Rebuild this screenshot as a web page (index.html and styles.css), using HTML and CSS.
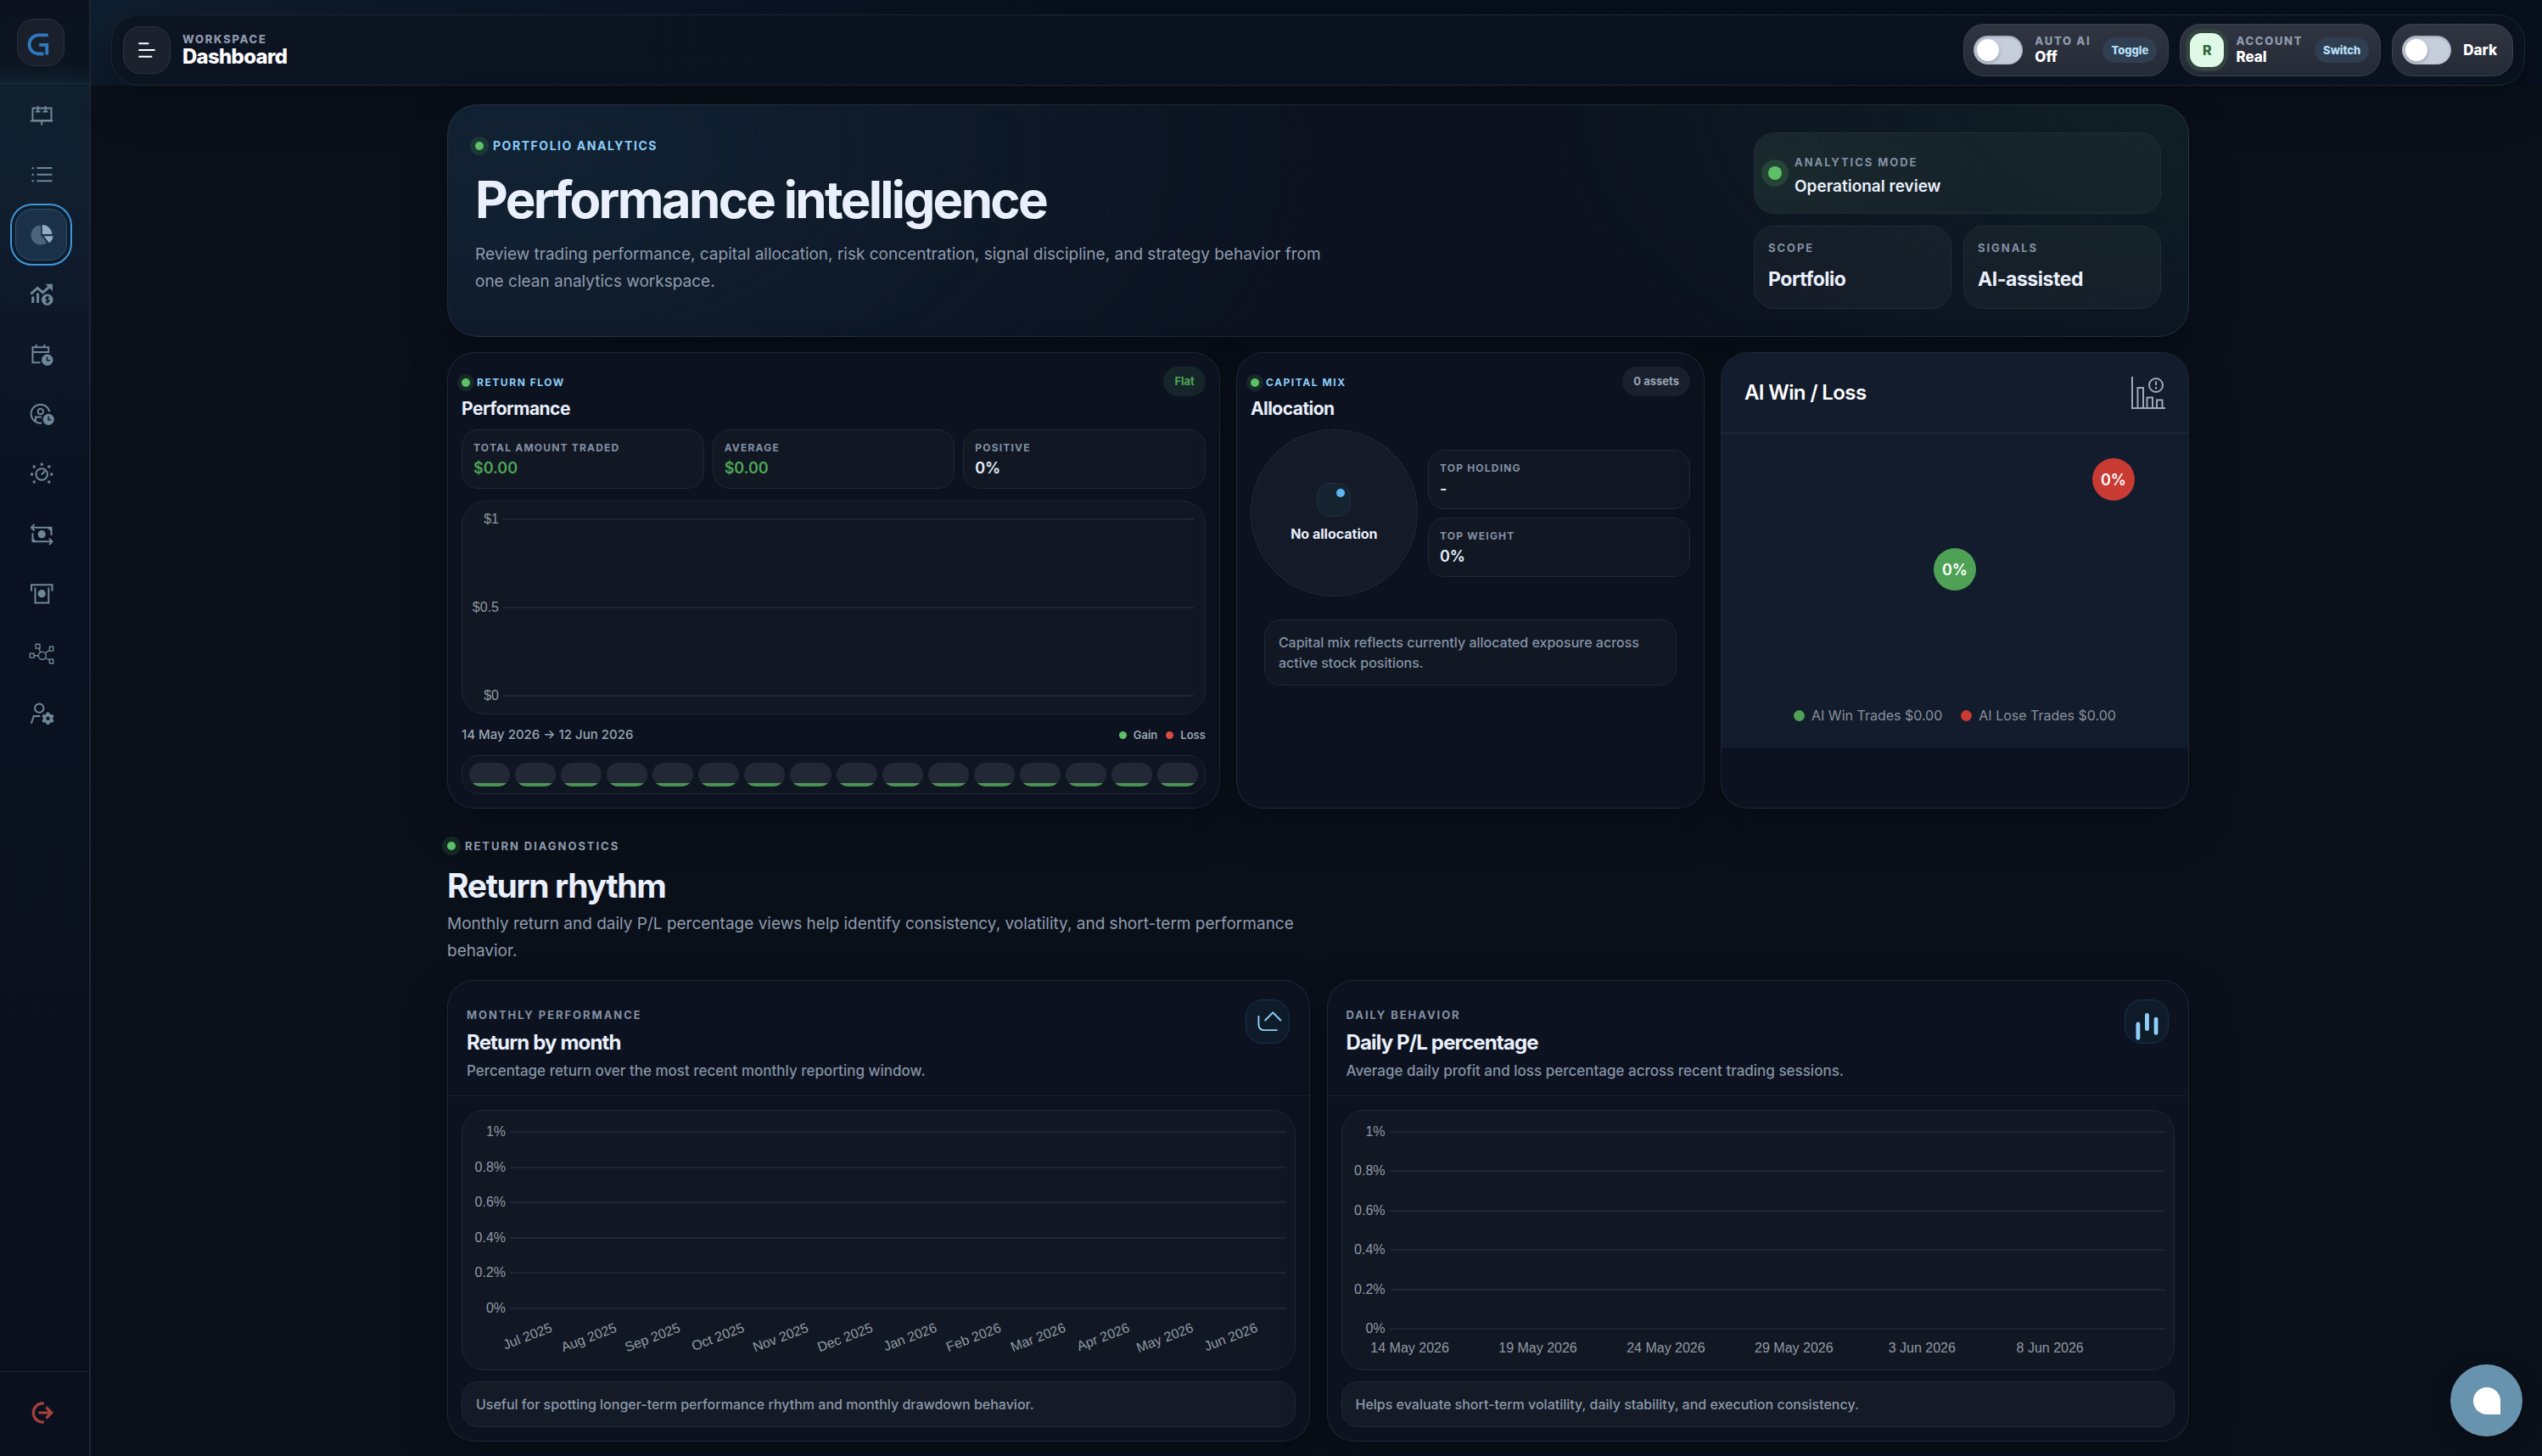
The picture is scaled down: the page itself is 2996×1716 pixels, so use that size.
FILE: index.html
```html
<!DOCTYPE html>
<html lang="en">
<head>
<meta charset="utf-8">
<meta name="viewport" content="width=device-width, initial-scale=1">
<title>Dashboard</title>
<link rel="stylesheet" href="styles.css">
</head>
<body>
<div class="app">
  <aside class="sidebar">
    <div class="brand">
      <a class="brand-logo" href="#" aria-label="Home">
        <svg viewBox="0 0 56 56"><path d="M37 19H25.500a11.500 11.500 0 0 0 0 23H31.500M26 31h9.500v12" /></svg>
      </a>
    </div>
    <nav class="nav" aria-label="Main">
      <a class="nav-item" href="#" aria-label="Boards"><svg viewBox="0 0 28 28"><path d="M3.500 5.500h22v14.500h-22zM.8 20.500h26.600M14.200 20v5.600M6.800 9.500h5.800M9.700 3v6.500M15.600 9.500h5.800M18.500 3v6.500"/></svg></a>
      <a class="nav-item" href="#" aria-label="List"><svg viewBox="0 0 28 28"><path d="M8.500 6h18M8.500 13.700h18M8.500 21.300h18M2.500 6.300h2.500M2.500 13.700h2.500M2.500 21.300h2.500"/></svg></a>
      <a class="nav-item active" href="#" aria-label="Analytics" aria-current="page"><svg viewBox="0 0 28 28"><path class="pie-dim" d="M13 2.600V14l7.200 9A11.500 11.500 0 1 1 13 2.600z"/><path class="pie-lit" d="M14.800 2A11.500 11.500 0 0 1 26.300 13H14.800zM16.500 15.300h11a11 11 0 0 1-4.300 7.900z"/></svg></a>
      <a class="nav-item" href="#" aria-label="Earnings"><svg viewBox="0 0 28 28"><path class="bold" d="M1.400 13.400 9.200 6.400l6.300 5.300 7-6M3.800 16.500V24M9.600 12.500V24"/><path class="fill" d="M18.500 1.800H27v8.500z"/><circle class="fill" cx="20.800" cy="20.300" r="6.800"/><path class="knock" d="M23 17.800c-.8-.8-4-.9-4 .8 0 1.800 3.900 1 3.900 2.900 0 1.700-3.300 1.500-4.200.6M20.900 15.800v9"/></svg></a>
      <a class="nav-item" href="#" aria-label="Schedule"><svg viewBox="0 0 28 28"><path d="M12.500 23.200H3.500V5.200h18.700V11H3.500M7.800 2v3M17.200 2v3"/><circle class="fill" cx="20.800" cy="20.300" r="6.700"/><path class="knock" d="M20.500 16.500v4.300h3.500"/></svg></a>
      <a class="nav-item" href="#" aria-label="Account history"><svg viewBox="0 0 28 28"><path d="M23.300 11.200A11 11 0 1 0 14.200 24.600M7 22.500v-5h7"/><circle cx="12.800" cy="11" r="3.200"/><circle class="fill" cx="22.200" cy="20.300" r="6.600"/><path class="knock" d="M22 16.500v4.300h3.500"/></svg></a>
      <a class="nav-item" href="#" aria-label="Risk dial"><svg viewBox="0 0 28 28"><circle cx="14.200" cy="14" r="6.800"/><path d="M13.700 14.500 18 10.200"/><path class="fill" d="M12.700.8h3v3h-3zM3.700 3.500h3v3h-3zM21.300 3.500h3v3h-3zM1 12.500h3v3H1zM24.300 12.500h3v3h-3zM3.700 21.500h3v3h-3zM21.300 21.500h3v3h-3z"/></svg></a>
      <a class="nav-item" href="#" aria-label="Transfers"><svg viewBox="0 0 28 28"><path d="M5.500 2 2 5.700l3.500 3.800M2 5.700h23.500V15M23 18.500l3.500 3.700L23 26M26.500 22.200H3.500v-10"/><path class="fill" d="M20 5.700h6V11zM3 17v5.500h5z"/><circle class="fill" cx="14.200" cy="13.700" r="4.600"/></svg></a>
      <a class="nav-item" href="#" aria-label="Withdraw"><svg viewBox="0 0 28 28"><path d="M2 10.700V3.200h24.500v7.500M6.500 6.500v18h15.800v-18"/><circle class="fill" cx="14.200" cy="13.700" r="4.600"/></svg></a>
      <a class="nav-item" href="#" aria-label="Network"><svg viewBox="0 0 28 28"><g class="thin"><path d="M7.200 2.300h4.800v4.800H7.200zM23.400 5.300h4.300v4.800h-4.300zM.3 13.300h4.800v4.800H.3zM23.400 20h4.300v4.800h-4.300zM5 15.700h5.300M10.800 7l1.700 4.800M18.500 13l4.900-4M18.700 18.500l4.700 2.700"/><circle cx="14.800" cy="15.700" r="4.500"/></g></svg></a>
      <a class="nav-item" href="#" aria-label="User settings"><svg viewBox="0 0 28 28"><circle cx="11.300" cy="7.600" r="5.200"/><path d="M1.800 25.800 4.800 17h7.500"/><circle class="gear" cx="21.500" cy="19.800" r="4"/><path class="teeth" d="M21.500 12.500v2.800M21.500 24.300v2.800M15.200 16.200l2.400 1.400M25.400 22l2.400 1.400M15.200 23.400l2.400-1.400M25.400 17.600l2.400-1.400"/></svg></a>
    </nav>
    <div class="logout-area">
      <button class="logout" type="button" aria-label="Log out"><svg viewBox="0 0 28 28"><path d="M15.700 2.800H14.500a11.200 11.200 0 0 0 0 22.400h1.200M9.500 14H25M18.300 7.500l6.500 6.500-6.500 6.500"/></svg></button>
    </div>
  </aside>

  <div class="page">
    <header class="topbar-wrap">
      <div class="topbar">
        <button class="menu-btn" type="button" aria-label="Menu"><svg viewBox="0 0 56 56"><path d="M18 20h12.500M18 28h20M18 36h16.500"/></svg></button>
        <div class="where">
          <span class="tag">Workspace</span>
          <strong class="where-name">Dashboard</strong>
        </div>
        <div class="controls">
          <div class="pill">
            <input class="switch" type="checkbox" id="auto-ai">
            <label class="pill-copy" for="auto-ai"><span class="tag">Auto AI</span><strong>Off</strong></label>
            <button class="mini-btn" type="button">Toggle</button>
          </div>
          <div class="pill">
            <span class="avatar">R</span>
            <div class="pill-copy"><span class="tag">Account</span><strong>Real</strong></div>
            <button class="mini-btn" type="button">Switch</button>
          </div>
          <div class="pill">
            <input class="switch" type="checkbox" id="theme">
            <label class="pill-copy" for="theme"><strong>Dark</strong></label>
          </div>
        </div>
      </div>
    </header>

    <main class="content">
      <section class="hero">
        <div class="hero-copy">
          <p class="eyebrow blue">Portfolio analytics</p>
          <h1>Performance intelligence</h1>
          <p class="lead">Review trading performance, capital allocation, risk concentration, signal discipline, and strategy behavior from one clean analytics workspace.</p>
        </div>
        <div class="hero-facts">
          <div class="fact mode">
            <i class="mode-dot"></i>
            <div><span class="fact-label">Analytics mode</span><strong>Operational review</strong></div>
          </div>
          <div class="fact"><span class="fact-label">Scope</span><strong>Portfolio</strong></div>
          <div class="fact"><span class="fact-label">Signals</span><strong>AI-assisted</strong></div>
        </div>
      </section>

      <section class="overview">
        <article class="card">
          <header class="card-head">
            <div><p class="eyebrow blue small">Return flow</p><h3>Performance</h3></div>
            <span class="badge gain">Flat</span>
          </header>
          <div class="stats">
            <div class="stat"><span>Total amount traded</span><strong class="up">$0.00</strong></div>
            <div class="stat"><span>Average</span><strong class="up">$0.00</strong></div>
            <div class="stat"><span>Positive</span><strong>0%</strong></div>
          </div>
          <div class="plot plot-money">
            <div class="rows">
              <div class="row">$1</div>
              <div class="row">$0.5</div>
              <div class="row">$0</div>
            </div>
          </div>
          <div class="range">
            <span>14 May 2026 → 12 Jun 2026</span>
            <span class="keys"><i class="key green"></i>Gain<i class="key red"></i>Loss</span>
          </div>
          <div class="strip">
            <i></i><i></i><i></i><i></i><i></i><i></i><i></i><i></i><i></i><i></i><i></i><i></i><i></i><i></i><i></i><i></i>
          </div>
        </article>

        <article class="card">
          <header class="card-head">
            <div><p class="eyebrow blue small">Capital mix</p><h3>Allocation</h3></div>
            <span class="badge">0 assets</span>
          </header>
          <div class="alloc">
            <div class="donut"><i class="donut-icon"></i><strong>No allocation</strong></div>
            <div class="alloc-stats">
              <div class="stat"><span>Top holding</span><strong>-</strong></div>
              <div class="stat"><span>Top weight</span><strong>0%</strong></div>
            </div>
          </div>
          <p class="alloc-note">Capital mix reflects currently allocated exposure across active stock positions.</p>
        </article>

        <article class="card winloss">
          <header class="winloss-head">
            <h3>AI Win / Loss</h3>
            <svg viewBox="0 0 40 38"><path d="M1 0v37M0 37h40M7.500 36V13h6.500v23M18.500 36V24.500h6.500V36M30 36V27.500h6.500V36"/><circle cx="29" cy="10" r="8"/><path d="M29 5.500v4.500M29 12v2.500"/></svg>
          </header>
          <div class="winloss-body">
            <div class="orbs"><span class="orb win">0%</span><span class="orb lose">0%</span></div>
            <ul class="legend"><li class="win-key">AI Win Trades $0.00</li><li class="lose-key">AI Lose Trades $0.00</li></ul>
          </div>
        </article>
      </section>

      <section class="section-head">
        <p class="eyebrow">Return diagnostics</p>
        <h2>Return rhythm</h2>
        <p class="lead">Monthly return and daily P/L percentage views help identify consistency, volatility, and short-term performance behavior.</p>
      </section>

      <section class="reports">
        <article class="report">
          <header class="report-head">
            <div>
              <p class="fact-label">Monthly performance</p>
              <h3>Return by month</h3>
              <p class="desc">Percentage return over the most recent monthly reporting window.</p>
            </div>
            <span class="report-icon"><svg viewBox="0 0 52 52"><path d="M15 19v10q0 7.500 7.500 7.500H38M22.500 25l10-10 10 10"/></svg></span>
          </header>
          <div class="report-body">
            <div class="plot plot-percent">
              <div class="rows">
                <div class="row">1%</div><div class="row">0.8%</div><div class="row">0.6%</div><div class="row">0.4%</div><div class="row">0.2%</div><div class="row">0%</div>
              </div>
              <div class="months">
                <div><span>Jul 2025</span></div><div><span>Aug 2025</span></div><div><span>Sep 2025</span></div><div><span>Oct 2025</span></div><div><span>Nov 2025</span></div><div><span>Dec 2025</span></div><div><span>Jan 2026</span></div><div><span>Feb 2026</span></div><div><span>Mar 2026</span></div><div><span>Apr 2026</span></div><div><span>May 2026</span></div><div><span>Jun 2026</span></div>
              </div>
            </div>
            <p class="report-note">Useful for spotting longer-term performance rhythm and monthly drawdown behavior.</p>
          </div>
        </article>

        <article class="report">
          <header class="report-head">
            <div>
              <p class="fact-label">Daily behavior</p>
              <h3>Daily P/L percentage</h3>
              <p class="desc">Average daily profit and loss percentage across recent trading sessions.</p>
            </div>
            <span class="report-icon"><svg viewBox="0 0 52 52"><path class="bars" d="M15.500 29v17M26.500 18v17M37.500 23v17"/></svg></span>
          </header>
          <div class="report-body">
            <div class="plot plot-percent">
              <div class="rows">
                <div class="row">1%</div><div class="row">0.8%</div><div class="row">0.6%</div><div class="row">0.4%</div><div class="row">0.2%</div><div class="row">0%</div>
              </div>
              <div class="days">
                <div><span>14 May 2026</span></div><div><span>19 May 2026</span></div><div><span>24 May 2026</span></div><div><span>29 May 2026</span></div><div><span>3 Jun 2026</span></div><div><span>8 Jun 2026</span></div>
              </div>
            </div>
            <p class="report-note">Helps evaluate short-term volatility, daily stability, and execution consistency.</p>
          </div>
        </article>
      </section>
    </main>
  </div>
  <button class="chat" type="button" aria-label="Open chat"><i></i></button>
</div>
</body>
</html>
```
FILE: styles.css
```css
:root {
  --bg: #0a101a;
  --line: rgba(170, 200, 230, 0.12);
  --box: #111824;
  --box-line: #202935;
  --text: #e9effb;
  --muted: #8f9bad;
  --blue: #8ccdf8;
  --green: #5dc066;
}

* { box-sizing: border-box; }

body {
  margin: 0;
  background: var(--bg);
  color: var(--text);
  font-family: Inter, "Liberation Sans", sans-serif;
  font-size: 16px;
}

h1, h2, h3, p, ul { margin: 0; padding: 0; }
button { border: 0; padding: 0; font: inherit; color: inherit; cursor: pointer; }
svg { display: block; fill: none; stroke: currentColor; stroke-width: 2; }

.app { display: flex; min-height: 100vh; }

/* Sidebar */
.sidebar {
  flex: none;
  display: flex;
  flex-direction: column;
  width: 107px;
  border-right: 2px solid #1e2533;
  background: linear-gradient(180deg, #0c1220 0, #0c1421 76px, #10202f 100px, #101e2e 240px, #0d1728 380px, #0b1422 520px, #0a1120 590px, #0a101d 100%);
}
.brand {
  display: flex;
  height: 99px;
  padding: 22px 20px;
  border-bottom: 1px solid #222b37;
}
.brand-logo {
  width: 56px;
  height: 56px;
  border: 1px solid #2a313c;
  border-radius: 20px;
  background: #19202c;
  color: #2f79bf;
}
.brand-logo svg { stroke-width: 4; }
.nav {
  display: flex;
  flex-direction: column;
  justify-content: space-between;
  height: 773px;
  padding: 6px 0 0 18px;
}
.nav-item {
  display: grid;
  place-items: center;
  width: 61px;
  height: 61px;
  border: 1px solid transparent;
  border-radius: 20px;
  color: #6f8798;
}
.nav-item svg { width: 28px; height: 28px; overflow: visible; }
.nav-item.active {
  border-color: #2c5573;
  background: #1b3149;
  outline: 2px solid #4096da;
  outline-offset: 4px;
}
.nav .fill { fill: currentColor; stroke: none; }
.nav .bold { stroke-width: 3; }
.nav .thin { stroke-width: 1.4; }
.nav .knock { stroke: #0f1a29; stroke-width: 1.6; }
.nav .gear { stroke-width: 3.6; }
.nav .teeth { stroke-width: 3.6; }
.pie-dim { fill: #4d657c; stroke: none; }
.pie-lit { fill: #91adc4; stroke: none; }
.logout-area {
  display: flex;
  height: 100px;
  margin-top: auto;
  border-top: 1px solid #1c2431;
  padding: 18px 0 0 20px;
}
.logout {
  display: grid;
  place-items: center;
  width: 60px;
  height: 60px;
  background: none;
  color: #a8403d;
}
.logout svg { width: 28px; height: 28px; stroke-width: 3.2; }

/* Top bar */
.page { flex: 1; min-width: 0; }
.topbar-wrap {
  padding: 17px 20px 0 24px;
  background: radial-gradient(1200px 500px at 0 0, #0f1e2e, rgba(10, 17, 30, 0)), #080f1d;
}
.topbar {
  display: flex;
  align-items: center;
  height: 84px;
  padding: 0 13px;
  border: 1px solid #1c2532;
  border-radius: 32px;
  background: linear-gradient(90deg, #0c1321, #0a111e);
  box-shadow: 0 20px 50px rgba(4, 6, 12, 0.35);
}
.menu-btn {
  width: 56px;
  height: 56px;
  border: 1px solid #2c333f;
  border-radius: 20px;
  background: #1b222e;
  color: #fff;
}
.menu-btn svg { width: 54px; height: 54px; }
.where { display: flex; flex-direction: column; margin-left: 14px; }
.tag {
  font-size: 13px;
  line-height: 16px;
  font-weight: 800;
  letter-spacing: 0.13em;
  text-transform: uppercase;
  color: #8f9aae;
}
.where-name {
  font-size: 24px;
  line-height: 26px;
  font-weight: 800;
  letter-spacing: -0.03em;
  color: #fff;
}
.controls { display: flex; gap: 13px; margin-left: auto; }
.pill {
  display: flex;
  align-items: center;
  gap: 14px;
  height: 62px;
  padding: 0 13px 0 11px;
  border: 1px solid #3a404c;
  border-radius: 24px;
  background: linear-gradient(180deg, #303541, #252a37);
}
.pill:last-child { padding-right: 18px; }
.switch {
  appearance: none;
  display: flex;
  align-items: center;
  width: 58px;
  height: 34px;
  margin: 0;
  padding: 0 4px;
  border-radius: 17px;
  background: #c6cddb;
  box-shadow: inset 0 1px 3px rgba(20, 30, 50, 0.35);
}
.switch::before {
  content: "";
  width: 26px;
  height: 26px;
  border-radius: 50%;
  background: #fff;
  box-shadow: 0 2px 5px rgba(20, 30, 50, 0.25);
}
.switch:checked { justify-content: flex-end; background: #5dc066; }
.pill-copy { display: flex; flex-direction: column; color: #fff; }
.pill-copy strong { font-size: 17px; line-height: 22px; font-weight: 800; }
.mini-btn {
  width: 64px;
  height: 30px;
  border-radius: 15px;
  background: #2f3e50;
  color: #b9e0fb;
  font-size: 13px;
  font-weight: 800;
}
.avatar {
  display: grid;
  place-items: center;
  width: 40px;
  height: 40px;
  border-radius: 14px;
  background: #e0f9e6;
  box-shadow: 0 0 0 5px #33433f;
  color: #2f6a3a;
  font-weight: 800;
}

/* Content */
.content {
  max-width: 2097px;
  margin: 0 auto;
  padding: 22px 20px 16px 24px;
}
.eyebrow {
  display: flex;
  align-items: center;
  font-size: 13px;
  line-height: 16px;
  font-weight: 700;
  letter-spacing: 0.15em;
  text-transform: uppercase;
  color: var(--muted);
}
.eyebrow::before {
  content: "";
  width: 10px;
  height: 10px;
  margin-right: 11px;
  border-radius: 50%;
  background: var(--green);
  box-shadow: 0 0 0 6px rgba(93, 192, 102, 0.14);
}
.eyebrow.blue { color: var(--blue); }
.eyebrow.small { font-size: 12px; letter-spacing: 0.13em; }
.eyebrow.small::before { margin-right: 8px; box-shadow: 0 0 0 5px rgba(93, 192, 102, 0.14); }
.lead {
  max-width: 1010px;
  font-size: 19px;
  line-height: 32px;
  font-weight: 400;
  color: var(--muted);
}
.fact-label {
  font-size: 13px;
  line-height: 16px;
  font-weight: 700;
  letter-spacing: 0.15em;
  text-transform: uppercase;
  color: #8390a4;
}

.hero {
  display: grid;
  grid-template-columns: 1fr 480px;
  gap: 40px;
  padding: 32px;
  border: 1px solid var(--line);
  border-radius: 36px;
  background:
    radial-gradient(940px 520px at 4% 20%, #112233, rgba(12, 19, 32, 0)),
    radial-gradient(760px 400px at 100% 0, #0f1f25, rgba(12, 19, 32, 0)),
    #0c1220;
  box-shadow: 0 20px 50px rgba(4, 6, 12, 0.35);
}
.hero-copy { padding-top: 8px; }
.hero-copy .eyebrow { font-size: 14px; letter-spacing: 0.11em; }
.hero h1 {
  margin: 23px 0 17px;
  font-size: 60px;
  line-height: 64px;
  font-weight: 700;
  letter-spacing: -0.045em;
}
.hero-facts {
  display: grid;
  grid-template-columns: 1fr 1fr;
  grid-template-rows: 96px 98px;
  gap: 14px;
}
.fact {
  display: flex;
  flex-direction: column;
  justify-content: center;
  gap: 15px;
  padding: 0 16px 4px;
  border: 1px solid #222c36;
  border-radius: 24px;
  background: rgba(255, 255, 255, 0.035);
}
.fact strong { font-size: 23px; line-height: 28px; font-weight: 700; letter-spacing: -0.02em; }
.fact.mode {
  grid-column: 1 / -1;
  flex-direction: row;
  align-items: center;
  justify-content: flex-start;
  padding-bottom: 0;
  background: radial-gradient(260px 160px at 0 50%, rgba(60, 140, 80, 0.11), rgba(60, 140, 80, 0)), rgba(255, 255, 255, 0.035);
}
.mode div { display: flex; flex-direction: column; gap: 9px; padding-top: 7px; }
.fact.mode strong { font-size: 19px; line-height: 24px; font-weight: 600; letter-spacing: 0; }
.mode-dot {
  width: 16px;
  height: 16px;
  border-radius: 50%;
  background: var(--green);
  box-shadow: 0 0 0 8px rgba(93, 192, 102, 0.18);
}

/* Overview */
.overview {
  display: grid;
  grid-template-columns: 165fr 100fr 100fr;
  gap: 19px;
  margin-top: 18px;
}
.card, .report {
  min-width: 0;
  border: 1px solid var(--line);
  border-radius: 32px;
  background: #0c121f;
  box-shadow: 0 20px 50px rgba(4, 6, 12, 0.35);
}
.card { padding: 16px; }
.card-head { display: flex; justify-content: space-between; align-items: flex-start; margin-bottom: 10px; }
.card-head .eyebrow { margin: 11px 0 9px; }
.card-head h3 { font-size: 21px; line-height: 28px; font-weight: 700; letter-spacing: -0.025em; }
.badge {
  padding: 0 13px;
  border-radius: 18px;
  background: #1a202d;
  color: #98a4b4;
  font-size: 13px;
  line-height: 35px;
  font-weight: 700;
}
.badge.gain { background: #15252a; color: #4ea655; }
.stats { display: grid; grid-template-columns: repeat(3, 1fr); gap: 10px; }
.stat {
  display: flex;
  flex-direction: column;
  gap: 4px;
  padding: 13px 13px 11px;
  border: 1px solid var(--box-line);
  border-radius: 20px;
  background: var(--box);
}
.stat span {
  font-size: 12px;
  line-height: 16px;
  font-weight: 700;
  letter-spacing: 0.1em;
  text-transform: uppercase;
  color: #8390a4;
}
.stat strong { font-size: 18px; line-height: 24px; font-weight: 600; }
.stat .up { color: #4ea655; }

.plot {
  display: flex;
  flex-direction: column;
  border: 1px solid var(--box-line);
  border-radius: 28px;
  background: var(--box);
  font-family: "Liberation Sans", Arial, sans-serif;
  font-size: 16px;
  line-height: 20px;
  color: #9298a2;
}
.rows { flex: 1; display: flex; flex-direction: column; justify-content: space-between; }
.row { display: grid; grid-template-columns: 39px 1fr; gap: 5px; align-items: center; text-align: right; }
.row::after { content: ""; height: 2px; background: #1f2631; }
.plot-money { height: 252px; margin: 14px 0; padding: 11px 13px 11px 11px; }
.plot-money .row { grid-template-columns: 32px 1fr; }
.plot-percent { height: 307px; padding: 15px 10px 16px 12px; }
.months {
  display: grid;
  grid-template-columns: repeat(12, 1fr);
  height: 46px;
  margin-left: 52px;
}
.months div { display: flex; justify-content: flex-end; width: 50%; padding-top: 3px; }
.months span { flex: none; white-space: nowrap; transform: rotate(-21deg); transform-origin: right top; height: 20px; }
.days {
  display: grid;
  grid-template-columns: repeat(6, 1fr);
  height: 22px;
  padding-top: 3px;
  margin-left: 53px;
}
.days div { display: flex; justify-content: center; width: 20%; }
.days span { flex: none; white-space: nowrap; }

.range {
  display: flex;
  justify-content: space-between;
  margin-bottom: 14px;
  font-size: 15px;
  line-height: 20px;
  font-weight: 500;
  color: #98a4b4;
}
.keys { display: flex; align-items: center; font-size: 13px; font-weight: 600; }
.key { width: 9px; height: 9px; margin-right: 8px; border-radius: 50%; background: var(--green); }
.key.red { margin-left: 10px; background: #dc4b46; }
.strip {
  display: flex;
  gap: 6px;
  padding: 8px;
  border: 1px solid var(--box-line);
  border-radius: 20px;
  background: #0f1521;
}
.strip i {
  flex: 1;
  height: 28px;
  border-radius: 14px;
  background: linear-gradient(0deg, #46854f 0, #4fa158 4px, #222836 4px);
}

.alloc { display: grid; grid-template-columns: 197px 1fr; gap: 12px; align-items: center; }
.donut {
  display: flex;
  flex-direction: column;
  align-items: center;
  justify-content: center;
  gap: 8px;
  height: 197px;
  border: 1px dashed #2f3641;
  border-radius: 50%;
  background: #141a27;
}
.donut strong { font-size: 16px; line-height: 24px; font-weight: 700; }
.donut-icon {
  display: flex;
  justify-content: flex-end;
  width: 40px;
  height: 40px;
  padding: 6px;
  border: 1px solid #20303f;
  border-radius: 15px;
  background: #162331;
}
.donut-icon::after { content: ""; width: 10px; height: 10px; border-radius: 50%; background: #5fb5f0; }
.alloc-stats { display: grid; gap: 10px; }
.alloc-note {
  margin: 27px 16px 0;
  padding: 14px 16px;
  border: 1px solid var(--box-line);
  border-radius: 20px;
  background: var(--box);
  font-size: 16px;
  line-height: 24px;
  font-weight: 500;
  color: #8593a6;
}

.winloss { display: flex; flex-direction: column; padding: 0; overflow: hidden; }
.winloss-head {
  display: flex;
  align-items: center;
  justify-content: space-between;
  height: 95px;
  padding: 0 27px;
  border-bottom: 1px solid #222d3c;
  background: #131c2c;
}
.winloss-head h3 { font-size: 24px; line-height: 28px; font-weight: 600; letter-spacing: -0.025em; color: #fff; }
.winloss-head svg { width: 40px; height: 38px; color: #9ba9ba; }
.winloss-body { display: flex; flex-direction: column; height: 370px; padding-bottom: 26px; background: #131c2c; }
.orbs { position: relative; flex: 1; }
.orb {
  position: absolute;
  display: grid;
  place-items: center;
  width: 50px;
  height: 50px;
  margin: -25px 0 0 -25px;
  border-radius: 50%;
  font-size: 18px;
  font-weight: 600;
  color: #fff;
}
.orb.win { left: 50%; top: 50%; background: #4ea155; }
.orb.lose { left: 84%; top: 17%; background: #c93a33; }
.legend { display: flex; justify-content: center; gap: 22px; list-style: none; font-size: 16px; line-height: 24px; color: #8a919d; }
.legend li { display: flex; align-items: center; gap: 8px; }
.legend li::before { content: ""; width: 13px; height: 13px; border-radius: 50%; background: #4ea155; }
.legend .lose-key::before { background: #c93a33; }

/* Reports */
.section-head { padding: 36px 0 18px; }
.section-head h2 {
  margin: 17px 0 7px;
  font-size: 39px;
  line-height: 44px;
  font-weight: 700;
  letter-spacing: -0.035em;
}
.reports { display: grid; grid-template-columns: 1fr 1fr; gap: 20px; }
.report-head {
  display: flex;
  justify-content: space-between;
  padding: 22px 23px 17px 22px;
  border-bottom: 1px solid #1a222e;
}
.report-head .fact-label { margin-top: 10px; }
.report-head h3 { margin: 11px 0 7px; font-size: 24px; line-height: 28px; font-weight: 700; letter-spacing: -0.035em; }
.desc { font-size: 17px; line-height: 24px; font-weight: 500; color: #8593a6; }
.report-icon {
  width: 52px;
  height: 52px;
  border: 1px solid #173450;
  border-radius: 20px;
  background: #0f1b29;
  color: #8fd0fb;
}
.report-icon svg { width: 50px; height: 50px; }
.report-icon .bars { stroke-width: 5; stroke-linecap: round; }
.report-body { padding: 16px; }
.report-note {
  margin-top: 13px;
  padding: 14px 16px;
  border: 1px solid #232b37;
  border-radius: 20px;
  background: #141a26;
  font-size: 16px;
  line-height: 24px;
  font-weight: 500;
  color: #8c99ab;
}

.chat {
  position: fixed;
  right: 23px;
  bottom: 23px;
  display: grid;
  place-items: center;
  width: 85px;
  height: 85px;
  border-radius: 50%;
  background: #6893af;
  box-shadow: 0 6px 24px rgba(0, 0, 0, 0.3);
}
.chat i { width: 32px; height: 32px; border-radius: 50% 50% 0 50%; background: #fff; }
```
